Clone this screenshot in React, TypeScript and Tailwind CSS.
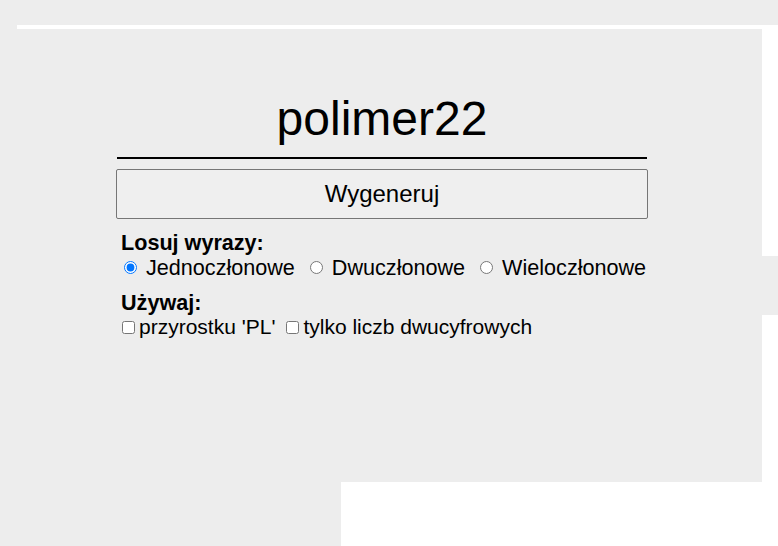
import { useState } from "react";

type Kind = "jedno" | "dwu" | "wielo";

const kinds: { id: Kind; label: string }[] = [
    { id: "jedno", label: "Jednoczłonowe" },
    { id: "dwu", label: "Dwuczłonowe" },
    { id: "wielo", label: "Wieloczłonowe" },
];

export default function App() {
    const [kind, setKind] = useState<Kind>("jedno");
    const [suffix, setSuffix] = useState(false);
    const [twoDigits, setTwoDigits] = useState(false);

    return (
        <div className="relative min-h-[546px] overflow-hidden bg-[#ededed] font-['Liberation_Sans',Arial,sans-serif] text-black">
            {/* white repaint leftovers seen in the screenshot */}
            <div className="absolute left-[17px] right-0 top-[25px] h-[4px] bg-white" />
            <div className="absolute left-[762px] top-[25px] h-[231px] w-[16px] bg-white" />
            <div className="absolute bottom-0 left-[762px] top-[315px] w-[16px] bg-white" />
            <div className="absolute bottom-0 left-[341px] right-0 top-[482px] bg-white" />

            <div className="ml-[116px] w-[532px] pt-[91px]">
                <div className="mx-px border-b-2 border-black pb-[11px] text-center text-[48px] leading-[55px]">
                    polimer22
                </div>
                <button className="mt-[10px] h-[50px] w-full rounded-[2px] border border-[#767676] bg-[#efefef] text-[24px]">
                    Wygeneruj
                </button>

                <div className="pl-[5px] pt-[11px] text-[21.6px] leading-[25px]">
                    <div className="font-bold">Losuj wyrazy:</div>
                    <div className="flex items-center gap-[12px]">
                        {kinds.map((k) => (
                            <label key={k.id} className="flex items-center gap-[9px]">
                                <input
                                    type="radio"
                                    name="kind"
                                    className="m-0 ml-[3px] h-[13px] w-[13px]"
                                    checked={kind === k.id}
                                    onChange={() => setKind(k.id)}
                                />
                                {k.label}
                            </label>
                        ))}
                    </div>

                    <div className="mt-[10px] font-bold">Używaj:</div>
                    <div className="flex items-center gap-[11px] text-[21px] leading-[24px]">
                        <label className="flex items-center gap-[4px]">
                            <input type="checkbox" className="m-0 ml-px h-[13px] w-[13px]" checked={suffix} onChange={() => setSuffix(!suffix)} />
                            przyrostku 'PL'
                        </label>
                        <label className="flex items-center gap-[4px]">
                            <input type="checkbox" className="m-0 h-[13px] w-[13px]" checked={twoDigits} onChange={() => setTwoDigits(!twoDigits)} />
                            tylko liczb dwucyfrowych
                        </label>
                    </div>
                </div>
            </div>
        </div>
    );
}
